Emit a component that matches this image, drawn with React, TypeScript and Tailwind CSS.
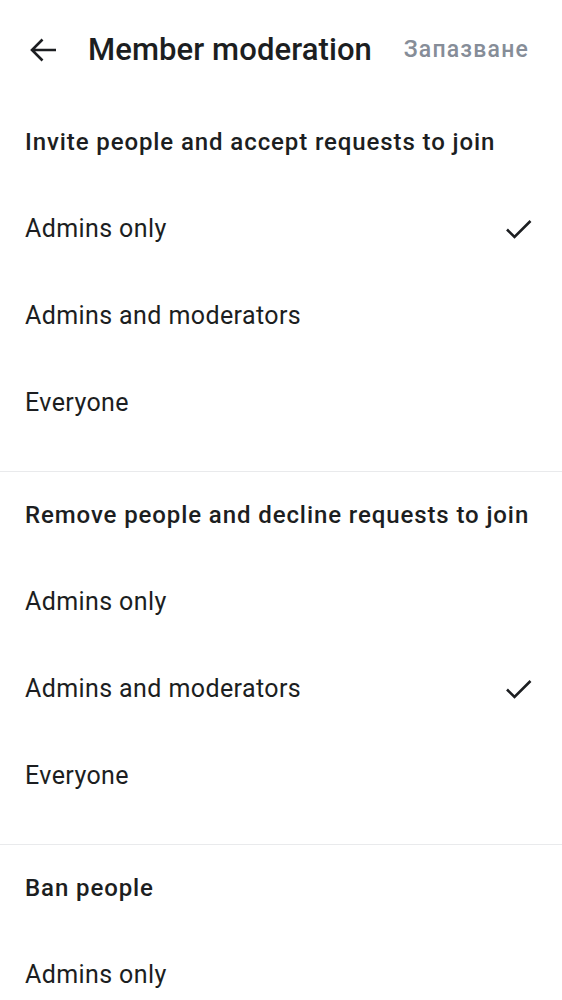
import React from "react";

const Check = () => (
  <svg width="30" height="24" viewBox="0 0 30 24" fill="none" className="shrink-0">
    <path d="M3 12.5 L10.5 20 L26.5 4" stroke="#1c1e21" strokeWidth="2.6" strokeLinecap="butt" strokeLinejoin="miter" />
  </svg>
);

type Section = { title: string; options: string[]; selected: number };

const sections: Section[] = [
  {
    title: "Invite people and accept requests to join",
    options: ["Admins only", "Admins and moderators", "Everyone"],
    selected: 0,
  },
  {
    title: "Remove people and decline requests to join",
    options: ["Admins only", "Admins and moderators", "Everyone"],
    selected: 1,
  },
  {
    title: "Ban people",
    options: ["Admins only"],
    selected: -1,
  },
];

export default function App() {
  return (
    <div
      className="w-[562px] h-[1000px] overflow-hidden bg-white text-[#1c1e21]"
      style={{ fontFamily: "Roboto, 'Noto Sans', sans-serif" }}
    >
      <div className="h-[99px] flex items-center pl-[29px] pr-[33px]">
        <svg width="28" height="26" viewBox="0 0 28 26" fill="none" className="shrink-0">
          <path d="M3 13 H27 M13.5 2.5 L3 13 L13.5 23.5" stroke="#1c1e21" strokeWidth="2.6" />
        </svg>
        <div className="ml-[31px] text-[31px] font-medium leading-none tracking-[0.1px]">Member moderation</div>
        <div className="ml-auto text-[23px] font-medium text-[#868d98] leading-none tracking-[1.2px]">Запазване</div>
      </div>
      {sections.map((s, i) => (
        <div key={i}>
          {i > 0 && <div className="h-px bg-[#e9eaec]" />}
          <div className="pb-[25px]">
            <div className="h-[86px] flex items-center px-[25px] text-[24px] font-medium leading-none tracking-[0.9px] whitespace-nowrap">{s.title}</div>
            {s.options.map((o, j) => (
              <div key={j} className="h-[87px] flex items-center justify-between pl-[25px] pr-[28px] text-[25px] leading-none tracking-[0.4px]">
                <span>{o}</span>
                {s.selected === j && <Check />}
              </div>
            ))}
          </div>
        </div>
      ))}
    </div>
  );
}
